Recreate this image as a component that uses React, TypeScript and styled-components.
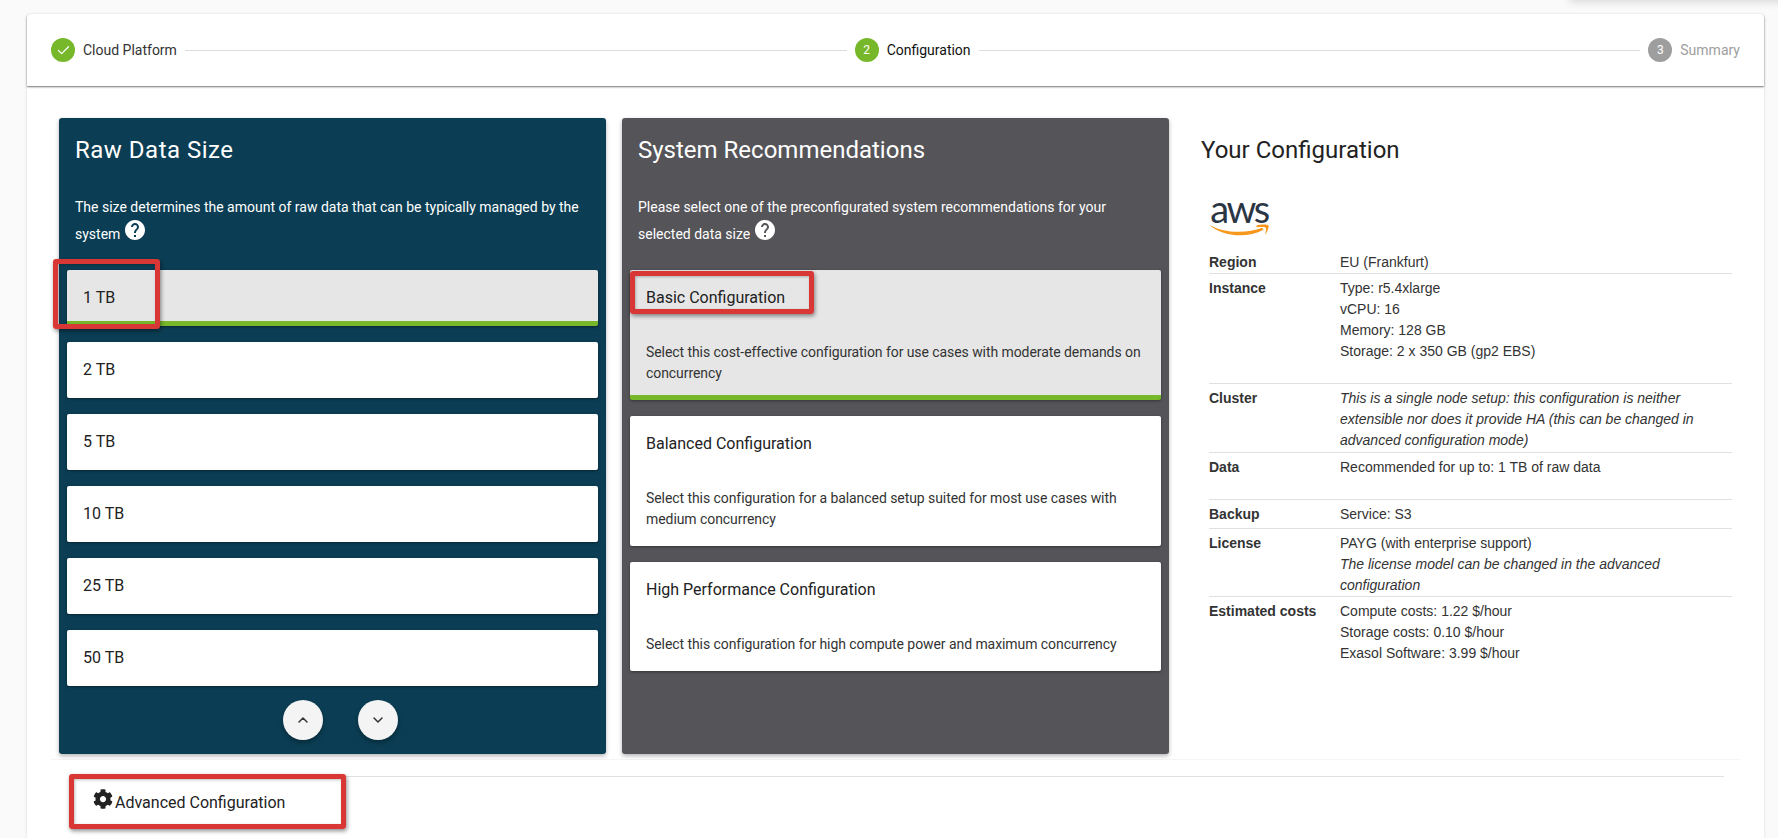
import React from 'react';
import styled, { createGlobalStyle } from 'styled-components';
import { FaCog } from 'react-icons/fa';
import { MdHelp } from 'react-icons/md';
import { ChevronUp, ChevronDown, Check } from 'lucide-react';

const Global = createGlobalStyle`
  html, body { margin: 0; padding: 0; height: 838px; overflow: hidden; background: #fafafa; }
  body { font-family: Roboto, "Liberation Sans", sans-serif; font-size: 14px; line-height: 21px; color: #333; }
  * { box-sizing: border-box; }
`;

const Page = styled.div`
  position: relative;
  height: 838px;
  padding: 14px 14px 0 27px;
  overflow: hidden;
`;

const CornerShadow = styled.div`
  position: absolute;
  top: -30px;
  right: -10px;
  width: 219px;
  height: 30px;
  border-radius: 4px;
  box-shadow: 0 2px 8px rgba(0, 0, 0, 0.14);
`;

const Card = styled.main`
  height: 840px;
  background: #fff;
  border-radius: 4px;
  box-shadow: 0 1px 3px rgba(0, 0, 0, 0.14);
`;

const Stepper = styled.header`
  display: flex;
  align-items: center;
  height: 72px;
  padding: 0 24px;
  background: #fff;
  border-radius: 4px 4px 0 0;
  box-shadow: 0 1px 2px rgba(0, 0, 0, 0.55);
`;

const Step = styled.div`
  display: flex;
  align-items: center;
  gap: 8px;
  flex: none;
`;

const StepDot = styled.span<{ $grey?: boolean }>`
  display: flex;
  align-items: center;
  justify-content: center;
  width: 24px;
  height: 24px;
  border-radius: 50%;
  background: ${p => (p.$grey ? '#9e9e9e' : '#76b82a')};
  color: #fff;
  font-size: 12px;
  line-height: 1;
`;

const StepLabel = styled.span<{ $muted?: boolean; $strong?: boolean }>`
  font-size: 14px;
  color: ${p => (p.$muted ? '#9e9e9e' : p.$strong ? '#111' : '#333')};
`;

const StepLine = styled.span`
  flex: 1;
  height: 1px;
  margin: 1px 8px 0;
  background: #dcdcdc;
`;

const Section = styled.section`
  display: grid;
  grid-template-columns: 547px 547px 1fr;
  column-gap: 16px;
  margin: 32px 24px 0 24px;
  padding: 0 0 5px 8px;
  border-bottom: 1px solid #f5f5f5;
`;

const Panel = styled.div<{ $bg: string }>`
  height: 636px;
  background: ${p => p.$bg};
  border-radius: 3px;
  color: #fff;
  box-shadow: 0 2px 4px rgba(0, 0, 0, 0.3);
`;

const PanelHeader = styled.div`
  height: 152px;
  padding: 16px 16px 0;
`;

const Heading = styled.h2<{ $tracking?: number }>`
  margin: 0;
  font-size: 24px;
  line-height: 32px;
  font-weight: 400;
  letter-spacing: ${p => p.$tracking ?? 0}px;
`;

const Description = styled.p`
  margin: 28px 0 0;
  font-size: 14px;
  line-height: 27px;
`;

const HelpIcon = styled(MdHelp)`
  vertical-align: 5px;
  margin: -8px 0 -8px -1px;
  color: #fff;
`;

const OptionList = styled.div`
  display: flex;
  flex-direction: column;
  gap: 16px;
  padding: 0 8px;
`;

const SizeOption = styled.div<{ $selected?: boolean }>`
  position: relative;
  height: 56px;
  padding: 16px 16px 0;
  font-size: 16px;
  line-height: 24px;
  color: #222;
  border-radius: 2px;
  background: ${p => (p.$selected ? '#e6e6e6' : '#fff')};
  border-bottom: ${p => (p.$selected ? '5px solid #76b82a' : '0')};
  box-shadow: 0 1px 3px rgba(0, 0, 0, 0.4);
`;

const ConfigOption = styled.div<{ $selected?: boolean }>`
  position: relative;
  padding: 16px 16px ${p => (p.$selected ? 11 : 16)}px;
  border-radius: 2px;
  background: ${p => (p.$selected ? '#e6e6e6' : '#fff')};
  border-bottom: ${p => (p.$selected ? '5px solid #76b82a' : '0')};
  box-shadow: 0 1px 3px rgba(0, 0, 0, 0.4);
`;

const ConfigTitle = styled.div`
  font-size: 16px;
  line-height: 24px;
  color: #222;
`;

const ConfigText = styled.div`
  margin-top: 32px;
  font-size: 14px;
  line-height: 21px;
  letter-spacing: -0.07px;
  color: #333;
`;

const Pager = styled.div`
  display: flex;
  justify-content: center;
  gap: 35px;
  padding: 14px 0 0 16px;
`;

const RoundButton = styled.button`
  display: flex;
  align-items: center;
  justify-content: center;
  width: 40px;
  height: 40px;
  padding: 0;
  border: 0;
  border-radius: 50%;
  background: #f4f4f4;
  color: #333;
  box-shadow: 0 3px 5px rgba(0, 0, 0, 0.3);
`;

const Summary = styled.aside`
  padding: 16px 8px 0 16px;
`;

const SummaryHeading = styled(Heading)`
  color: #222;
`;

const Logo = styled.div`
  display: flex;
  flex-direction: column;
  width: 60px;
  height: 37px;
  margin: 34px 0 15px 8px;
`;

const LogoWord = styled.span`
  display: block;
  height: 27px;
  font-family: Lato, sans-serif;
  font-size: 38px;
  line-height: 17px;
  letter-spacing: -2.4px;
  text-align: center;
  color: #2b3645;
`;

const Swoosh = styled.svg`
  display: block;
  width: 60px;
  height: 14px;
  margin-top: -4px;
`;

const Table = styled.div`
  margin-left: 8px;
`;

const Row = styled.div<{ $top?: number; $bottom?: number; $last?: boolean }>`
  display: grid;
  grid-template-columns: 131px 1fr;
  padding: ${p => p.$top ?? 4}px 0 ${p => p.$bottom ?? 0}px;
  border-bottom: ${p => (p.$last ? '0' : '1px solid #e0e0e0')};
  font-family: "Liberation Sans", Arial, sans-serif;
  font-size: 14px;
  line-height: 21px;
  color: #333;
`;

const RowLabel = styled.div`
  font-weight: 700;
`;

const RowValue = styled.div``;

const Line = styled.div`
  min-height: 21px;
`;

const ItalicLine = styled(Line)`
  font-style: italic;
`;

const Footer = styled.footer`
  position: relative;
  margin: 16px 40px 0 42px;
  border-top: 1px solid #e0e0e0;
  padding: 12px 0 0 24px;
  display: flex;
  align-items: flex-start;
`;

const Gear = styled(FaCog)`
  flex: none;
  margin-right: 2px;
  color: #222;
`;

const FooterLabel = styled.span`
  font-size: 16px;
  line-height: 24px;
  padding-top: 2px;
  color: #222;
`;

const Callout = styled.span<{ $left: number; $top: number; $w: number; $h: number }>`
  position: absolute;
  left: ${p => p.$left}px;
  top: ${p => p.$top}px;
  width: ${p => p.$w}px;
  height: ${p => p.$h}px;
  border: 5px solid #d93636;
  border-radius: 3px;
  box-shadow: 1px 2px 4px rgba(0, 0, 0, 0.45), inset 1px 1px 3px rgba(0, 0, 0, 0.25);
  pointer-events: none;
`;

const sizes = ['2 TB', '5 TB', '10 TB', '25 TB', '50 TB'];

export default function App() {
  return (
    <Page>
      <Global />
      <CornerShadow />
      <Card>
        <Stepper>
          <Step>
            <StepDot><Check size={15} strokeWidth={2} /></StepDot>
            <StepLabel>Cloud Platform</StepLabel>
          </Step>
          <StepLine />
          <Step>
            <StepDot>2</StepDot>
            <StepLabel $strong>Configuration</StepLabel>
          </Step>
          <StepLine />
          <Step>
            <StepDot $grey>3</StepDot>
            <StepLabel $muted>Summary</StepLabel>
          </Step>
        </Stepper>

        <Section>
          <Panel $bg="#0b3e54">
            <PanelHeader>
              <Heading $tracking={0.5}>Raw Data Size</Heading>
              <Description>
                The size determines the amount of raw data that can be typically managed by the system <HelpIcon size={24} />
              </Description>
            </PanelHeader>
            <OptionList>
              <SizeOption $selected>
                1 TB
                <Callout $left={-14} $top={-11} $w={107} $h={70} />
              </SizeOption>
              {sizes.map(s => <SizeOption key={s}>{s}</SizeOption>)}
            </OptionList>
            <Pager>
              <RoundButton aria-label="Previous"><ChevronUp size={16} strokeWidth={2.2} /></RoundButton>
              <RoundButton aria-label="Next"><ChevronDown size={16} strokeWidth={2.2} /></RoundButton>
            </Pager>
          </Panel>

          <Panel $bg="#555459">
            <PanelHeader>
              <Heading>System Recommendations</Heading>
              <Description>
                Please select one of the preconfigurated system recommendations for your selected data size <HelpIcon size={24} />
              </Description>
            </PanelHeader>
            <OptionList>
              <ConfigOption $selected>
                <ConfigTitle>Basic Configuration</ConfigTitle>
                <ConfigText>Select this cost-effective configuration for use cases with moderate demands on concurrency</ConfigText>
                <Callout $left={0} $top={1} $w={184} $h={43} />
              </ConfigOption>
              <ConfigOption>
                <ConfigTitle>Balanced Configuration</ConfigTitle>
                <ConfigText>Select this configuration for a balanced setup suited for most use cases with medium concurrency</ConfigText>
              </ConfigOption>
              <ConfigOption>
                <ConfigTitle>High Performance Configuration</ConfigTitle>
                <ConfigText>Select this configuration for high compute power and maximum concurrency</ConfigText>
              </ConfigOption>
            </OptionList>
          </Panel>

          <Summary>
            <SummaryHeading>Your Configuration</SummaryHeading>
            <Logo>
              <LogoWord>aws</LogoWord>
              <Swoosh viewBox="0 0 62 14" aria-hidden="true">
                <path fill="#f7981d" d="M0.5 1.5C12 9 36 12 55 4.8L56.4 6.8C38 16.5 12 13 0.5 1.5Z" />
                <path fill="#f7981d" d="M49 2.4C53 1.4 60 0.8 61.6 2.5C62 5 59.5 10 58 11.8C58.5 9 59.6 5.5 58.5 4.6C57 3.6 52 3.9 49 4.1Z" />
              </Swoosh>
            </Logo>
            <Table>
              <Row $top={0}>
                <RowLabel>Region</RowLabel>
                <RowValue>EU (Frankfurt)</RowValue>
              </Row>
              <Row>
                <RowLabel>Instance</RowLabel>
                <RowValue>
                  <Line>Type: r5.4xlarge</Line>
                  <Line>vCPU: 16</Line>
                  <Line>Memory: 128 GB</Line>
                  <Line>Storage: 2 x 350 GB (gp2 EBS)</Line>
                  <Line />
                </RowValue>
              </Row>
              <Row $bottom={1}>
                <RowLabel>Cluster</RowLabel>
                <RowValue>
                  <ItalicLine>This is a single node setup: this configuration is neither extensible nor does it provide HA (this can be changed in advanced configuration mode)</ItalicLine>
                </RowValue>
              </Row>
              <Row>
                <RowLabel>Data</RowLabel>
                <RowValue>
                  <Line>Recommended for up to: 1 TB of raw data</Line>
                  <Line />
                </RowValue>
              </Row>
              <Row $bottom={3}>
                <RowLabel>Backup</RowLabel>
                <RowValue>Service: S3</RowValue>
              </Row>
              <Row>
                <RowLabel>License</RowLabel>
                <RowValue>
                  <Line>PAYG (with enterprise support)</Line>
                  <ItalicLine>The license model can be changed in the advanced configuration</ItalicLine>
                </RowValue>
              </Row>
              <Row $last>
                <RowLabel>Estimated costs</RowLabel>
                <RowValue>
                  <Line>Compute costs: 1.22 $/hour</Line>
                  <Line>Storage costs: 0.10 $/hour</Line>
                  <Line>Exasol Software: 3.99 $/hour</Line>
                </RowValue>
              </Row>
            </Table>
          </Summary>
        </Section>

        <Footer>
          <Gear size={20} />
          <FooterLabel>Advanced Configuration</FooterLabel>
          <Callout $left={0} $top={-3} $w={277} $h={55} />
        </Footer>
      </Card>
    </Page>
  );
}
